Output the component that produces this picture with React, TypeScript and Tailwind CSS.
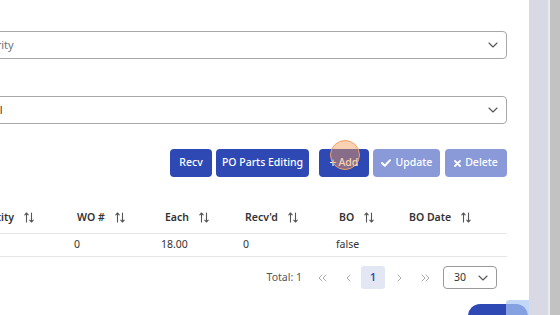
import React from "react";

const SortIcon = () => (
  <svg width="10" height="11" viewBox="0 0 10 11" className="inline-block ml-[10px] -mt-[1px]" fill="none" stroke="#555" strokeWidth="1.1" strokeLinecap="round" strokeLinejoin="round">
    <path d="M2.5 10V1M0.8 2.8L2.5 1L4.2 2.8" />
    <path d="M7.5 1V10M5.8 8.2L7.5 10L9.2 8.2" />
  </svg>
);

const Chevron = ({ className = "" }: { className?: string }) => (
  <svg width="10" height="6" viewBox="0 0 10 6" className={className} fill="none" stroke="#555" strokeWidth="1.1" strokeLinecap="round" strokeLinejoin="round">
    <path d="M1 1L5 5L9 1" />
  </svg>
);

const PageArrow = ({ d, w }: { d: string; w: number }) => (
  <svg width={w} height="8" viewBox={`0 0 ${w} 8`} fill="none" stroke="#aaa" strokeWidth="1" strokeLinecap="round" strokeLinejoin="round">
    <path d={d} />
  </svg>
);

export default function App() {
  const font = { fontFamily: '"Noto Sans", "Open Sans", sans-serif' };
  return (
    <div className="flex h-[315px] w-[560px] overflow-hidden bg-white" style={font}>
      <div className="relative w-[529px] overflow-hidden bg-white">
        <div className="ml-[-40px] w-[547px] pt-[31px]">
          {/* Select 1 */}
          <div className="flex h-[28px] items-center justify-between rounded-[4px] border border-[#a8a8a8] pl-[15px] pr-[8px] text-[11px] text-[#6c757d]">
            <span>Priority</span>
            <Chevron />
          </div>
          {/* Select 2 */}
          <div className="mt-[37px] flex h-[28px] items-center justify-between rounded-[4px] border border-[#a8a8a8] pl-[29px] pr-[8px] text-[11px] text-[#333]">
            <span>All</span>
            <Chevron />
          </div>
          {/* Buttons */}
          <div className="mt-[25px] flex h-[28px] justify-end text-[10.5px] font-medium text-white">
            <button className="h-[28px] w-[42px] rounded-[4px] bg-[#2f49b4]">Recv</button>
            <button className="ml-[4px] h-[28px] w-[93px] rounded-[4px] bg-[#2f49b4]">PO Parts Editing</button>
            <button className="ml-[10px] flex h-[28px] w-[50px] items-center justify-center rounded-[4px] bg-[#2f49b4]">
              <span className="mr-[2px] text-[12px] leading-none">+</span>Add
            </button>
            <button className="ml-[4px] flex h-[28px] w-[67px] items-center justify-center rounded-[4px] bg-[#8a9ad8]">
              <svg width="10" height="8" viewBox="0 0 10 8" className="mr-[5px]" fill="none" stroke="white" strokeWidth="2" strokeLinecap="round" strokeLinejoin="round">
                <path d="M1 4L3.8 6.8L9 1.2" />
              </svg>
              Update
            </button>
            <button className="ml-[5px] flex h-[28px] w-[62px] items-center justify-center rounded-[4px] bg-[#8a9ad8]">
              <svg width="7" height="7" viewBox="0 0 7 7" className="mr-[4px]" fill="none" stroke="white" strokeWidth="1.8" strokeLinecap="round">
                <path d="M1 1L6 6M6 1L1 6" />
              </svg>
              Delete
            </button>
          </div>
          {/* Table */}
          <div className="mt-[25px] text-[10.5px] text-[#333]">
            <div className="flex h-[32px] items-center border-b border-[#e6e6e6] font-semibold">
              <div className="w-[106px] pl-[9px]">Quantity<SortIcon /></div>
              <div className="w-[87px] pl-[11px]">WO #<SortIcon /></div>
              <div className="w-[82px] pl-[12px]">Each<SortIcon /></div>
              <div className="w-[93px] pl-[10px]">Recv'd<SortIcon /></div>
              <div className="w-[73px] pl-[11px]">BO<SortIcon /></div>
              <div className="flex-1 pl-[8px]">BO Date<SortIcon /></div>
            </div>
            <div className="flex h-[23px] items-center border-b border-[#e6e6e6]">
              <div className="w-[106px]"></div>
              <div className="w-[87px] pl-[8px]">0</div>
              <div className="w-[82px] pl-[8px]">18.00</div>
              <div className="w-[93px] pl-[8px]">0</div>
              <div className="w-[73px] pl-[8px]">false</div>
              <div className="flex-1"></div>
            </div>
          </div>
          {/* Pagination */}
          <div className="mt-[9px] flex h-[23px] items-center justify-end pr-[10px] text-[10.5px] text-[#555]">
            <span className="mr-[8px]">Total: 1</span>
            <span className="flex w-[24px] justify-center"><PageArrow w={9} d="M4 1L1 4L4 7M8 1L5 4L8 7" /></span>
            <span className="ml-[2px] flex w-[24px] justify-center"><PageArrow w={5} d="M4 1L1 4L4 7" /></span>
            <span className="ml-[1px] flex h-[23px] w-[24px] items-center justify-center rounded-[3px] bg-[#e3e7f4] font-semibold text-[#2f49b4]">1</span>
            <span className="ml-[2px] flex w-[24px] justify-center"><PageArrow w={5} d="M1 1L4 4L1 7" /></span>
            <span className="ml-[2px] flex w-[24px] justify-center"><PageArrow w={9} d="M1 1L4 4L1 7M5 1L8 4L5 7" /></span>
            <div className="ml-[6px] flex h-[23px] w-[54px] items-center justify-between rounded-[4px] border border-[#999] pl-[10px] pr-[8px] text-[#333]">
              <span>30</span>
              <Chevron />
            </div>
          </div>
        </div>
        {/* Orange click marker */}
        <div className="absolute left-[330px] top-[140px] h-[30px] w-[30px] rounded-full border-[1.5px] border-[#f3a465] bg-[#f59a55]/45"></div>
        {/* Bottom floating button */}
        <div className="absolute left-[468px] top-[304px] h-[24px] w-[60px] rounded-[12px] bg-[#2f49b4]"></div>
        <div className="absolute left-[506px] top-[300px] h-[20px] w-[26px] rounded-[3px] bg-[#a9c8f3]/70"></div>
      </div>
      <div className="w-[19px] bg-[#d9d9e6]"></div>
      <div className="w-[2px] bg-[#e9e9ef]"></div>
      <div className="flex-1 bg-[#c2c2c2]"></div>
    </div>
  );
}
